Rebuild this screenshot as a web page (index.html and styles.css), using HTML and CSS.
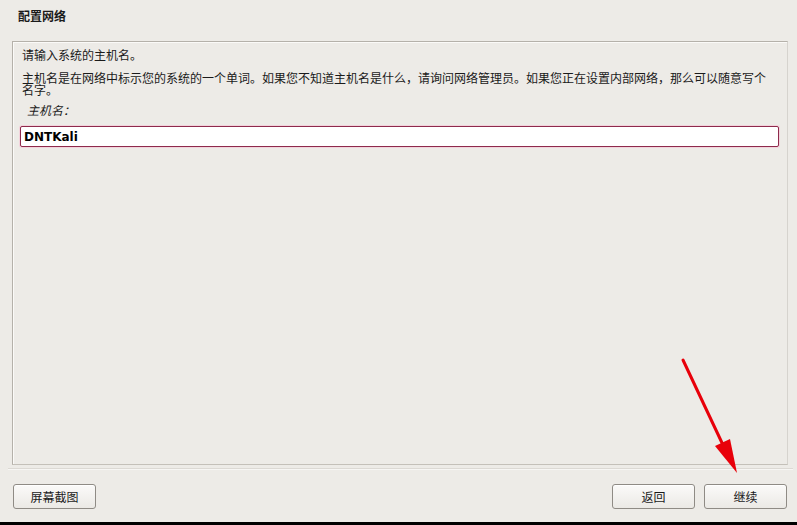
FILE: index.html
```html
<!DOCTYPE html>
<html lang="zh-CN">

<head>
    <meta charset="UTF-8">
    <meta name="viewport" content="width=device-width, initial-scale=1.0">
    <title>配置网络</title>
    <link rel="stylesheet" href="styles.css">
</head>

<body>
    <div class="installer">
        <div class="header">
            <h1>配置网络</h1>
        </div>

        <div class="panel">
            <p class="intro">请输入系统的主机名。</p>
            <p class="desc">主机名是在网络中标示您的系统的一个单词。如果您不知道主机名是什么，请询问网络管理员。如果您正在设置内部网络，那么可以随意写个名字。</p>
            <label class="field-label" for="hostname">主机名：</label>
            <input type="text" id="hostname" class="field" value="DNTKali">
        </div>

        <div class="separator"></div>

        <div class="actions">
            <button type="button" class="btn">屏幕截图</button>
            <div class="spacer"></div>
            <button type="button" class="btn">返回</button>
            <button type="button" class="btn">继续</button>
        </div>

        <div class="bottom-bar"></div>

        <!-- red annotation arrow pointing at the continue button -->
        <svg class="annotation" width="797" height="525" viewBox="0 0 797 525">
            <line x1="683" y1="360" x2="723" y2="445" stroke="#e8000a" stroke-width="3" stroke-linecap="round" />
            <polygon points="715,446 730,439 737,473" fill="#e8000a" />
        </svg>
    </div>
</body>

</html>
```

FILE: styles.css
```css
:root {
    --bg-color: #edebe7;
    --text-color: #1a1a1a;
    --panel-border: #b5b1aa;
    --panel-light: #fbfaf8;
    --input-border: #8e2a4c;
    --input-glow: #f3d3dc;
    --button-border: #8f8b85;
}

html,
body {
    margin: 0;
    padding: 0;
}

body {
    font-family: "Noto Sans CJK SC", "DejaVu Sans", sans-serif;
    font-size: 12px;
    color: var(--text-color);
    background-color: var(--bg-color);
}

.installer {
    position: relative;
    width: 797px;
    height: 525px;
    display: flex;
    flex-direction: column;
    overflow: hidden;
}

.header {
    height: 41px;
    box-sizing: border-box;
    padding: 8px 18px 0;
}

.header h1 {
    margin: 0;
    font-size: 12px;
    line-height: 16px;
    font-weight: bold;
}

.panel {
    height: 424px;
    box-sizing: border-box;
    margin: 0 9px 0 12px;
    padding: 5px 8px 0 7px;
    border: 1px solid var(--panel-border);
    border-right-color: #d6d3ce;
    border-bottom-color: #c4c0b9;
    box-shadow: inset 1px 1px 0 var(--panel-light);
}

.intro,
.desc {
    margin: 0;
    padding-left: 2px;
}

.intro {
    line-height: 16px;
}

.desc {
    margin-top: 9px;
    line-height: 12px;
    width: 750px;
}

.field-label {
    display: block;
    margin-top: 7px;
    padding-left: 7px;
    font-style: italic;
    line-height: 14px;
}

.field {
    display: block;
    width: 759px;
    height: 21px;
    margin-top: 9px;
    padding: 0 3px;
    box-sizing: border-box;
    border: 1px solid var(--input-border);
    border-radius: 2px;
    box-shadow: 0 0 0 1px var(--input-glow);
    background-color: #fff;
    font-family: "DejaVu Sans", sans-serif;
    font-size: 12px;
    font-weight: bold;
    color: #000;
    outline: none;
}

.separator {
    height: 1px;
    margin: 3px 4px 0 8px;
    background-color: #dcd9d4;
    border-bottom: 1px solid #f7f6f4;
}

.actions {
    display: flex;
    align-items: center;
    gap: 9px;
    margin-top: 14px;
    padding: 0 10px 0 13px;
    height: 25px;
}

.spacer {
    flex: 1;
}

.btn {
    width: 83px;
    height: 25px;
    box-sizing: border-box;
    border: 1px solid var(--button-border);
    border-radius: 3px;
    background: linear-gradient(#fbfaf9, #ebe9e5);
    box-shadow: inset 0 1px 0 #fff;
    font-family: "Noto Sans CJK SC", sans-serif;
    font-size: 12px;
    color: var(--text-color);
    padding: 0;
}

.bottom-bar {
    position: absolute;
    left: 0;
    right: 0;
    bottom: 0;
    height: 3px;
    background-color: #000;
}

.annotation {
    position: absolute;
    left: 0;
    top: 0;
    pointer-events: none;
}
```
